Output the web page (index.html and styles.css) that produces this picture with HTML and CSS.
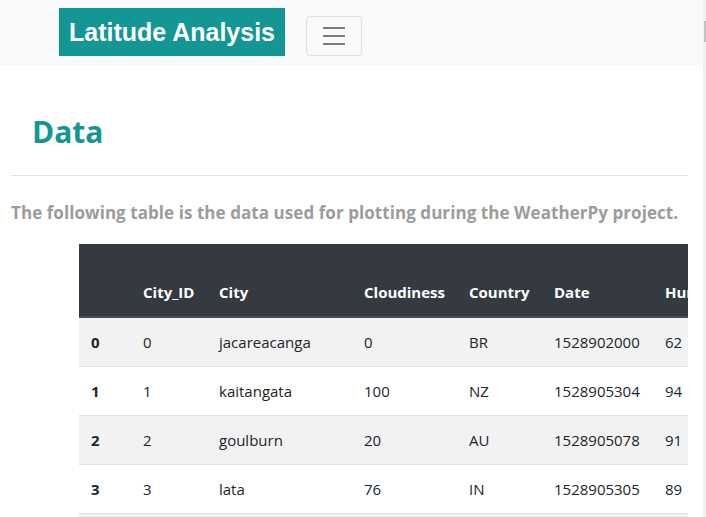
FILE: index.html
```
<!DOCTYPE html>
<html>
<head>
<meta charset="utf-8">
<link rel="stylesheet" href="styles.css">
</head>
<body>
<div class="page">
  <div class="main">
    <nav class="navbar">
      <a class="brand">Latitude Analysis</a>
      <button class="toggler" aria-label="menu">
        <svg width="30" height="30" viewBox="0 0 30 30"><path d="M4 7h22M4 15h22M4 23h22" stroke="rgba(0,0,0,0.5)" stroke-width="2" stroke-linecap="butt"/></svg>
      </button>
    </nav>
    <div class="content">
      <h2 class="title">Data</h2>
      <hr class="rule">
      <p class="lead">The following table is the data used for plotting during the WeatherPy project.</p>
      <div class="table-wrap">
        <table class="data">
          <thead>
            <tr>
              <th class="c0"></th>
              <th class="c1">City_ID</th>
              <th class="c2">City</th>
              <th class="c3">Cloudiness</th>
              <th class="c4">Country</th>
              <th class="c5">Date</th>
              <th class="c6">Humidity</th>
              <th>Lat</th>
              <th>Lng</th>
              <th>Max<br>Temp</th>
              <th>Wind Speed</th>
            </tr>
          </thead>
          <tbody>
            <tr class="odd"><th>0</th><td>0</td><td>jacareacanga</td><td>0</td><td>BR</td><td>1528902000</td><td>62</td><td>-6.22</td><td>-57.76</td><td>89.75</td><td>2.8</td></tr>
            <tr><th>1</th><td>1</td><td>kaitangata</td><td>100</td><td>NZ</td><td>1528905304</td><td>94</td><td>-46.28</td><td>169.85</td><td>42.75</td><td>3.09</td></tr>
            <tr class="odd"><th>2</th><td>2</td><td>goulburn</td><td>20</td><td>AU</td><td>1528905078</td><td>91</td><td>-34.75</td><td>149.72</td><td>46.67</td><td>4.38</td></tr>
            <tr><th>3</th><td>3</td><td>lata</td><td>76</td><td>IN</td><td>1528905305</td><td>89</td><td>30.78</td><td>78.62</td><td>63.72</td><td>0.81</td></tr>
            <tr class="odd"><th>4</th><td>4</td><td>chokurdakh</td><td>88</td><td>RU</td><td>1528905306</td><td>95</td><td>70.62</td><td>147.9</td><td>35.92</td><td>8.3</td></tr>
          </tbody>
        </table>
      </div>
    </div>
  </div>
  <div class="scrollbar"><div class="thumb"></div></div>
</div>
</body>
</html>
```
FILE: styles.css
```
html, body {
  margin: 0;
  padding: 0;
  height: 100%;
  overflow: hidden;
}
body {
  font-family: "Open Sans", "Noto Sans", sans-serif;
  color: #212529;
  background: #fff;
}
.page {
  display: flex;
  width: 706px;
  height: 517px;
  overflow: hidden;
}
.main {
  width: 703px;
  flex: none;
  overflow: hidden;
}
.scrollbar {
  width: 3px;
  flex: none;
  background: #f0f0f0;
  padding-top: 21px;
  box-sizing: border-box;
}
.thumb {
  height: 21px;
  margin-left: 1px;
  background: #c1c1c1;
}
.navbar {
  display: flex;
  align-items: flex-start;
  height: 65px;
  box-sizing: border-box;
  padding: 8px 0 0 59px;
  background: #f8f9fa;
}
.brand {
  display: flex;
  align-items: center;
  justify-content: center;
  width: 226px;
  height: 48px;
  padding-top: 1px;
  box-sizing: border-box;
  background: #149694;
  color: #fff;
  font-family: "Liberation Sans", Arial, sans-serif;
  font-weight: bold;
  font-size: 25px;
}
.toggler {
  margin: 8px 0 0 21px;
  width: 56px;
  height: 40px;
  padding: 4px 12px;
  border: 1px solid rgba(0,0,0,0.1);
  border-radius: 4px;
  background: transparent;
  display: flex;
  align-items: center;
  justify-content: center;
}
.toggler svg { display: block; }
.content {
  margin-left: 11px;
  width: 677px;
}
.title {
  margin: 48px 0 0 0;
  padding-left: 21px;
  font-size: 30px;
  line-height: 38px;
  font-weight: 700;
  color: #149694;
}
.rule {
  margin: 24px 0 0 0;
  border: 0;
  border-top: 1px solid #e3e3e3;
}
.lead {
  margin: 25px 0 0 0;
  font-size: 17px;
  line-height: 24px;
  font-weight: 700;
  letter-spacing: 0.06px;
  color: #9c9c9c;
  white-space: nowrap;
}
.table-wrap {
  margin: 19px 0 0 68px;
  overflow: hidden;
}
.data {
  border-collapse: collapse;
  font-size: 15px;
  line-height: 24px;
  table-layout: fixed;
  width: 1100px;
}
.data th, .data td {
  padding: 12px;
  text-align: left;
  vertical-align: bottom;
  border-top: 1px solid #dee2e6;
  white-space: nowrap;
}
.data thead th {
  background: #343a40;
  color: #fff;
  border-top: 0;
  border-bottom: 2px solid #454d55;
  font-weight: 700;
}
.data tbody tr.odd { background: #f2f2f2; }
.data tbody th { font-weight: 700; }
.data tbody td, .data tbody th { vertical-align: top; }
.c0 { width: 28px; }
.c1 { width: 52px; }
.c2 { width: 121px; }
.c3 { width: 81px; }
.c4 { width: 61px; }
.c5 { width: 87px; }
.c6 { width: 70px; }
.data thead th:nth-child(10) { white-space: normal; }
```
